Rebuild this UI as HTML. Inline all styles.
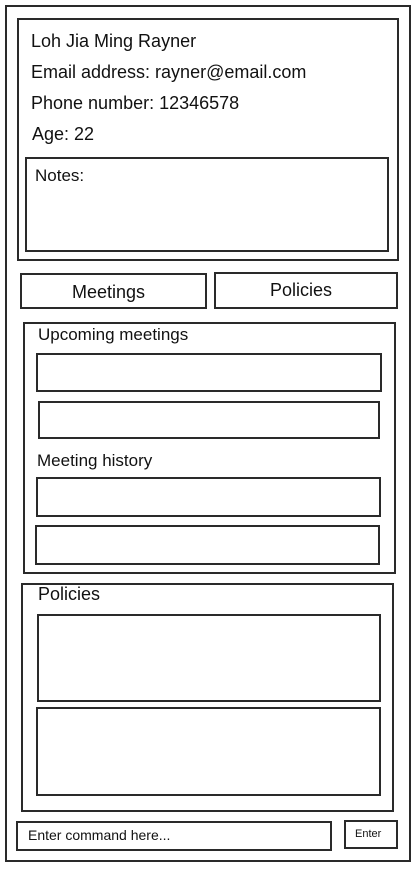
<!DOCTYPE html>
<html><head><meta charset="utf-8"><style>
body{margin:0;width:418px;height:870px;background:#fff;position:relative;overflow:hidden;font-family:"Liberation Sans",sans-serif;color:#111}
.b{position:absolute;border:2px solid #2a2a2a;box-sizing:border-box}
.t{position:absolute;white-space:nowrap}
</style></head><body>
<div class="b" style="left:5px;top:5px;width:406px;height:857px"></div>
<div class="b" style="left:17px;top:18px;width:382px;height:243px"></div>
<div class="t" style="left:31px;top:31px;font-size:18px">Loh Jia Ming Rayner</div>
<div class="t" style="left:31px;top:62px;font-size:18px">Email address: rayner@email.com</div>
<div class="t" style="left:31px;top:93px;font-size:18px">Phone number: 12346578</div>
<div class="t" style="left:32px;top:124px;font-size:18px">Age: 22</div>
<div class="b" style="left:25px;top:157px;width:364px;height:95px"></div>
<div class="t" style="left:35px;top:166px;font-size:17px">Notes:</div>
<div class="b" style="left:20px;top:273px;width:187px;height:36px"></div>
<div class="t" style="left:72px;top:282px;font-size:18px">Meetings</div>
<div class="b" style="left:214px;top:272px;width:184px;height:37px"></div>
<div class="t" style="left:270px;top:280px;font-size:18px">Policies</div>
<div class="b" style="left:23px;top:322px;width:373px;height:252px"></div>
<div class="t" style="left:38px;top:325px;font-size:17px">Upcoming meetings</div>
<div class="b" style="left:36px;top:353px;width:346px;height:39px"></div>
<div class="b" style="left:38px;top:401px;width:342px;height:38px"></div>
<div class="t" style="left:37px;top:451px;font-size:17px">Meeting history</div>
<div class="b" style="left:36px;top:477px;width:345px;height:40px"></div>
<div class="b" style="left:35px;top:525px;width:345px;height:40px"></div>
<div class="b" style="left:21px;top:583px;width:373px;height:229px"></div>
<div class="t" style="left:38px;top:584px;font-size:18px">Policies</div>
<div class="b" style="left:37px;top:614px;width:344px;height:88px"></div>
<div class="b" style="left:36px;top:707px;width:345px;height:89px"></div>
<div class="b" style="left:16px;top:821px;width:316px;height:30px"></div>
<div class="t" style="left:28px;top:827px;font-size:14px">Enter command here...</div>
<div class="b" style="left:344px;top:820px;width:54px;height:29px"></div>
<div class="t" style="left:355px;top:828px;font-size:11px">Enter</div>
</body></html>
